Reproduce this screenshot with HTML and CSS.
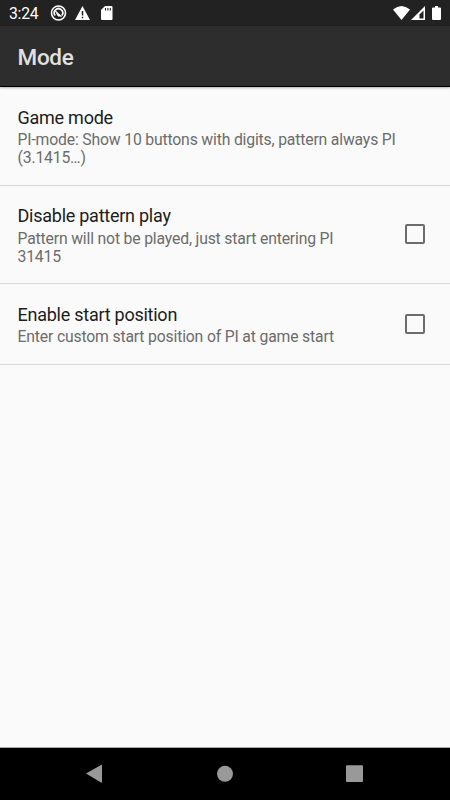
FILE: index.html
```html
<!DOCTYPE html>
<html lang="en">
<head>
<meta charset="utf-8">
<title>Mode</title>
<link rel="stylesheet" href="styles.css">
</head>
<body>
<div class="status">
  <span class="time">3:24</span>
  <svg class="notif" viewBox="0 0 66 20" width="66" height="20">
    <circle cx="9.500" cy="10" r="7" fill="none" stroke="#fff" stroke-width="1.600"/>
    <path d="M6.200 12.500A4.200 4.200 0 1 1 12.800 12.500" fill="none" stroke="#fff" stroke-width="1.700"/>
    <path d="M6.500 8L12.500 13.300L9 13Z" fill="#fff" stroke="#fff" stroke-width=".8"/>
    <path d="M33.500 3L41 17H26Z" fill="#fff"/>
    <path d="M33.500 8V12.500M33.500 13.800V15.300" stroke="#222" stroke-width="1.500"/>
    <path d="M56 3H62.500Q63.500 3 63.500 4V16Q63.500 17 62.500 17H53Q52 17 52 16V7Z" fill="#fff"/>
    <path d="M56.500 5V7.500M58.900 5V7.500M61.300 5V7.500" stroke="#222" stroke-width="1.100"/>
  </svg>
  <svg class="system" viewBox="0 0 52 20" width="52" height="20">
    <path d="M1 6.500Q9.500 -0.500 18 6.500L9.500 17Z" fill="#fff"/>
    <path d="M33 3V17H19Z" fill="#fff"/>
    <path d="M31.500 7.500V15.500H27.500V11.500Z" fill="#222"/>
    <path d="M41 4.500H43V3H46V4.500H48Q49 4.500 49 5.500V16Q49 17 48 17H41Q40 17 40 16V5.500Q40 4.500 41 4.500Z" fill="#fff"/>
  </svg>
</div>
<header class="bar"><h1>Mode</h1></header>
<main class="list">
  <section class="row"><div class="text"><h2>Game mode</h2><p>PI-mode: Show 10 buttons with digits, pattern always PI<br>(3.1415…)</p></div></section>
  <section class="row compact"><div class="text"><h2>Disable pattern play</h2><p>Pattern will not be played, just start entering PI<br>31415</p></div><span class="check"></span></section>
  <section class="row"><div class="text"><h2>Enable start position</h2><p>Enter custom start position of PI at game start</p></div><span class="check"></span></section>
</main>
<nav class="nav">
  <svg viewBox="0 0 450 52" width="450" height="52" fill="#999">
    <path d="M86 25.500L101 17Q102 16.500 102 17.500V34Q102 35 101 34.500Z"/>
    <circle cx="225" cy="25.800" r="8"/>
    <rect x="346" y="17.300" width="17" height="16.800" rx="1"/>
  </svg>
</nav>
</body>
</html>
```
FILE: styles.css
```css
body { margin: 0; width: 450px; height: 800px; display: flex; flex-direction: column; overflow: hidden; background: #fafafa; font-family: Roboto, sans-serif; }
.status { box-sizing: border-box; height: 26px; flex: none; display: flex; align-items: center; background: #222; color: #fff; padding: 0 6px 0 9px; }
.time { width: 40px; padding-top: 2px; font-size: 15.750px; line-height: 24px; letter-spacing: -.25px; }
.system { margin-left: auto; }
.bar { box-sizing: border-box; height: 61px; flex: none; display: flex; align-items: center; padding-left: 17.500px; background: #2d2d2d; border-bottom: 1px solid #000; box-shadow: 0 1px 2px rgba(0, 0, 0, .3); }
h1 { margin: 2px 0 0; font-size: 22.500px; font-weight: 500; line-height: 28px; letter-spacing: -.3px; color: #e0e0e0; }
.list { flex: 1; }
.row { box-sizing: border-box; display: flex; align-items: center; padding: 18px 25px 18px 17.500px; border-bottom: 1px solid #d8d8d8; }
.compact { padding-top: 17px; }
.compact p { margin: 1px 0 -1px; }
.text { flex: 1; }
h2 { margin: 0; font-size: 18px; font-weight: 400; line-height: 26px; letter-spacing: -.25px; color: #1c1c1c; }
p { margin: 0; font-size: 15.750px; line-height: 18px; letter-spacing: -.17px; color: #6c6c6c; white-space: nowrap; }
.check { box-sizing: border-box; width: 20px; height: 20px; border: 2px solid #6c6c6c; border-radius: 2px; }
.nav { box-sizing: border-box; height: 53px; flex: none; background: #000; border-top: 1px solid #aaa; }
.nav svg { display: block; }
```
